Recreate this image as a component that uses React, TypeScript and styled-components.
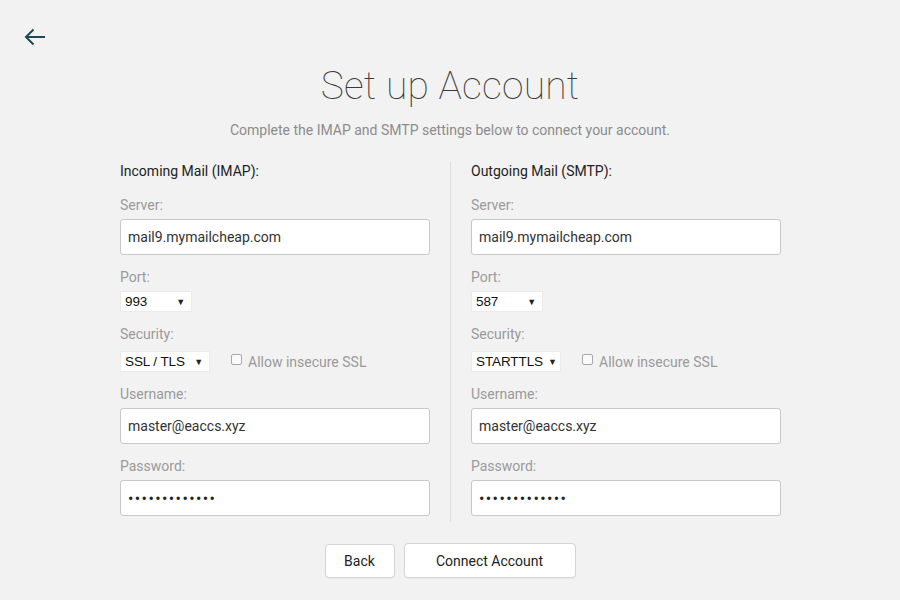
import React from "react";
import styled, { createGlobalStyle } from "styled-components";

const GlobalStyle = createGlobalStyle`
  html, body { margin: 0; padding: 0; }
  body {
    background: #f2f2f2;
    font-family: Roboto, "Noto Sans", sans-serif;
    -webkit-font-smoothing: antialiased;
  }
  * { box-sizing: border-box; }
`;

const Page = styled.div`
  width: 900px;
  height: 600px;
  position: relative;
  display: flex;
  flex-direction: column;
  align-items: center;
  background: #f2f2f2;
`;

const BackArrow = styled.button`
  position: absolute;
  left: 22px;
  top: 26px;
  width: 26px;
  height: 22px;
  padding: 0;
  border: none;
  background: transparent;
  display: flex;
  align-items: center;
  justify-content: center;
  cursor: pointer;
`;

const Title = styled.h1`
  margin: 62px 0 0;
  font-family: Roboto, sans-serif;
  font-weight: 100;
  font-size: 39px;
  line-height: 48px;
  color: #3a3a3a;
  letter-spacing: 0.2px;
`;

const Subtitle = styled.p`
  margin: 11px 0 0;
  font-size: 14px;
  line-height: 18px;
  color: #8c8c8c;
`;

const Columns = styled.div`
  margin-top: 23px;
  width: 660px;
  display: grid;
  grid-template-columns: 330px 330px;
`;

const Column = styled.div<{ $right?: boolean }>`
  display: flex;
  flex-direction: column;
  padding: ${(p) => (p.$right ? "0 0 6px 20px" : "0 20px 6px 0")};
  border-left: ${(p) => (p.$right ? "1px solid #dcdcdc" : "none")};
`;

const SectionHeader = styled.div`
  font-size: 14px;
  line-height: 18px;
  color: #222;
  margin: 0 0 16px;
`;

const Label = styled.div`
  font-size: 14px;
  line-height: 18px;
  color: #9a9a9a;
  margin-bottom: 5px;
`;

const TextInput = styled.input`
  width: 310px;
  height: 36px;
  border: 1px solid #c8c8c8;
  border-radius: 3px;
  background: #fff;
  padding: 0 7px;
  font-family: Roboto, sans-serif;
  font-size: 14px;
  color: #333;
  margin-bottom: 13px;
  outline: none;
`;

const PasswordInput = styled(TextInput)`
  font-size: 16px;
  letter-spacing: 1.4px;
  color: #222;
  margin-bottom: 0;
`;

const Row = styled.div`
  display: flex;
  align-items: center;
  gap: 21px;
  margin: 3px 0 13px;
`;

const Select = styled.div<{ $w: number }>`
  width: ${(p) => p.$w}px;
  height: 21px;
  background: #fff;
  border: 1px solid #ebebeb;
  display: flex;
  align-items: center;
  padding: 0 6px 0 4px;
  font-family: "Liberation Sans", Arial, sans-serif;
  font-size: 13.5px;
  letter-spacing: -0.1px;
  color: #111;
  margin-bottom: 13px;
  white-space: nowrap;
`;

const InlineSelect = styled(Select)`
  margin-bottom: 0;
`;

const Caret = styled.span`
  margin-left: auto;
  padding-left: 5px;
  flex-shrink: 0;
  font-size: 9px;
  color: #222;
`;

const CheckLabel = styled.label`
  display: flex;
  align-items: center;
  gap: 6px;
  font-size: 14px;
  color: #9a9a9a;
`;

const Box = styled.span`
  width: 11px;
  height: 11px;
  border: 1px solid #a8a8a8;
  border-radius: 2px;
  background: #fafafa;
  display: inline-block;
  margin-top: -4px;
`;

const Buttons = styled.div`
  margin-top: 21px;
  display: flex;
  align-items: center;
  gap: 9px;
`;

const Button = styled.button<{ $w: number; $h: number }>`
  width: ${(p) => p.$w}px;
  height: ${(p) => p.$h}px;
  background: #fff;
  border: 1px solid #d4d4d4;
  border-radius: 4px;
  font-family: Roboto, sans-serif;
  font-size: 14px;
  color: #222;
  box-shadow: 0 1px 1px rgba(0, 0, 0, 0.04);
  cursor: pointer;
`;

type Cfg = {
  header: string;
  port: string;
  portW: number;
  sec: string;
  secW: number;
};

const Settings: React.FC<{ cfg: Cfg; right?: boolean }> = ({ cfg, right }) => (
  <Column $right={right}>
    <SectionHeader>{cfg.header}</SectionHeader>
    <Label>Server:</Label>
    <TextInput defaultValue="mail9.mymailcheap.com" />
    <Label>Port:</Label>
    <Select $w={cfg.portW}>
      <span>{cfg.port}</span>
      <Caret>▼</Caret>
    </Select>
    <Label>Security:</Label>
    <Row>
      <InlineSelect $w={cfg.secW}>
        <span>{cfg.sec}</span>
        <Caret>▼</Caret>
      </InlineSelect>
      <CheckLabel>
        <Box />
        Allow insecure SSL
      </CheckLabel>
    </Row>
    <Label>Username:</Label>
    <TextInput defaultValue="master@eaccs.xyz" />
    <Label>Password:</Label>
    <PasswordInput type="password" defaultValue="aaaaaaaaaaaaa" />
  </Column>
);

export default function App() {
  return (
    <>
      <GlobalStyle />
      <Page>
        <BackArrow aria-label="Back">
          <svg width="22" height="18" viewBox="0 0 22 18" fill="none">
            <path d="M21 9H2.5" stroke="#1d4a55" strokeWidth="2" />
            <path d="M9.5 1.5L2 9l7.5 7.5" stroke="#1d4a55" strokeWidth="2" />
          </svg>
        </BackArrow>
        <Title>Set up Account</Title>
        <Subtitle>Complete the IMAP and SMTP settings below to connect your account.</Subtitle>
        <Columns>
          <Settings
            cfg={{ header: "Incoming Mail (IMAP):", port: "993", portW: 72, sec: "SSL / TLS", secW: 90 }}
          />
          <Settings
            right
            cfg={{ header: "Outgoing Mail (SMTP):", port: "587", portW: 72, sec: "STARTTLS", secW: 90 }}
          />
        </Columns>
        <Buttons>
          <Button $w={70} $h={34}>Back</Button>
          <Button $w={172} $h={35}>Connect Account</Button>
        </Buttons>
      </Page>
    </>
  );
}
